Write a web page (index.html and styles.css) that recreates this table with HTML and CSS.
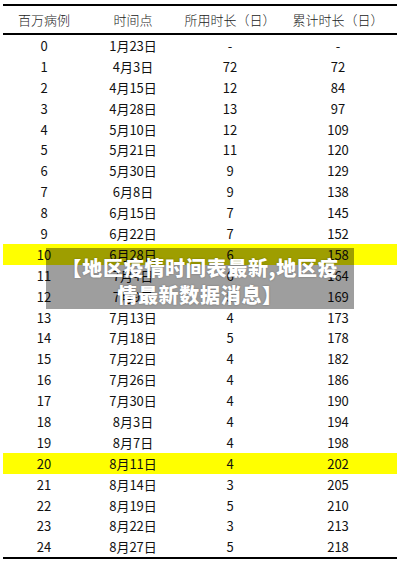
FILE: index.html
```html
<!DOCTYPE html>
<html lang="zh">
<head>
<meta charset="utf-8">
<link rel="stylesheet" href="styles.css">
</head>
<body>
<div class="page">
  <div class="table">
    <div class="row head"><span>百万病例</span><span>时间点</span><span>所用时长（日）</span><span>累计时长（日）</span></div>
    <div class="body">
      <div class="row"><span>0</span><span>1月23日</span><span>-</span><span>-</span></div>
      <div class="row"><span>1</span><span>4月3日</span><span>72</span><span>72</span></div>
      <div class="row"><span>2</span><span>4月15日</span><span>12</span><span>84</span></div>
      <div class="row"><span>3</span><span>4月28日</span><span>13</span><span>97</span></div>
      <div class="row"><span>4</span><span>5月10日</span><span>12</span><span>109</span></div>
      <div class="row"><span>5</span><span>5月21日</span><span>11</span><span>120</span></div>
      <div class="row"><span>6</span><span>5月30日</span><span>9</span><span>129</span></div>
      <div class="row"><span>7</span><span>6月8日</span><span>9</span><span>138</span></div>
      <div class="row"><span>8</span><span>6月15日</span><span>7</span><span>145</span></div>
      <div class="row"><span>9</span><span>6月22日</span><span>7</span><span>152</span></div>
      <div class="row hl"><span>10</span><span>6月28日</span><span>6</span><span>158</span></div>
      <div class="row"><span>11</span><span>7月4日</span><span>6</span><span>164</span></div>
      <div class="row"><span>12</span><span>7月9日</span><span>5</span><span>169</span></div>
      <div class="row"><span>13</span><span>7月13日</span><span>4</span><span>173</span></div>
      <div class="row"><span>14</span><span>7月18日</span><span>5</span><span>178</span></div>
      <div class="row"><span>15</span><span>7月22日</span><span>4</span><span>182</span></div>
      <div class="row"><span>16</span><span>7月26日</span><span>4</span><span>186</span></div>
      <div class="row"><span>17</span><span>7月30日</span><span>4</span><span>190</span></div>
      <div class="row"><span>18</span><span>8月3日</span><span>4</span><span>194</span></div>
      <div class="row"><span>19</span><span>8月7日</span><span>4</span><span>198</span></div>
      <div class="row hl"><span>20</span><span>8月11日</span><span>4</span><span>202</span></div>
      <div class="row"><span>21</span><span>8月14日</span><span>3</span><span>205</span></div>
      <div class="row"><span>22</span><span>8月19日</span><span>5</span><span>210</span></div>
      <div class="row"><span>23</span><span>8月22日</span><span>3</span><span>213</span></div>
      <div class="row"><span>24</span><span>8月27日</span><span>5</span><span>218</span></div>
    </div>
  </div>
  <div class="overlay">【地区疫情时间表最新,地区疫<br>情最新数据消息】</div>
</div>
</body>
</html>
```
FILE: styles.css
```css
html, body {
  margin: 0;
  padding: 0;
  background: #ffffff;
}
.page {
  position: relative;
  width: 402px;
  height: 563px;
  overflow: hidden;
  padding: 4px 5px 0 3px;
  box-sizing: border-box;
}
.table {
  width: 394px;
  border-top: 2px solid #000;
  border-bottom: 2px solid #000;
  font-family: "Noto Sans CJK SC", sans-serif;
  font-size: 13px;
  color: #111;
}
.row {
  display: grid;
  grid-template-columns: 82px 96px 98px 118px;
  height: 20.9px;
  align-items: center;
  text-align: center;
  line-height: 1;
}
.row span {
  display: block;
}
.head {
  height: 27px;
  border-bottom: 2px solid #000;
  font-weight: 300;
  color: #222;
}
.hl {
  background: #ffff00;
}
.overlay {
  position: absolute;
  left: 46px;
  top: 248px;
  width: 308px;
  height: 61px;
  box-sizing: border-box;
  padding-top: 6px;
  background: rgba(0, 0, 0, 0.38);
  color: #fff;
  font-family: "Noto Sans CJK SC", sans-serif;
  font-weight: 900;
  font-size: 20px;
  letter-spacing: 0.7px;
  line-height: 27px;
  text-align: center;
  text-shadow: 0 0 2px rgba(0,0,0,0.3);
}
```
